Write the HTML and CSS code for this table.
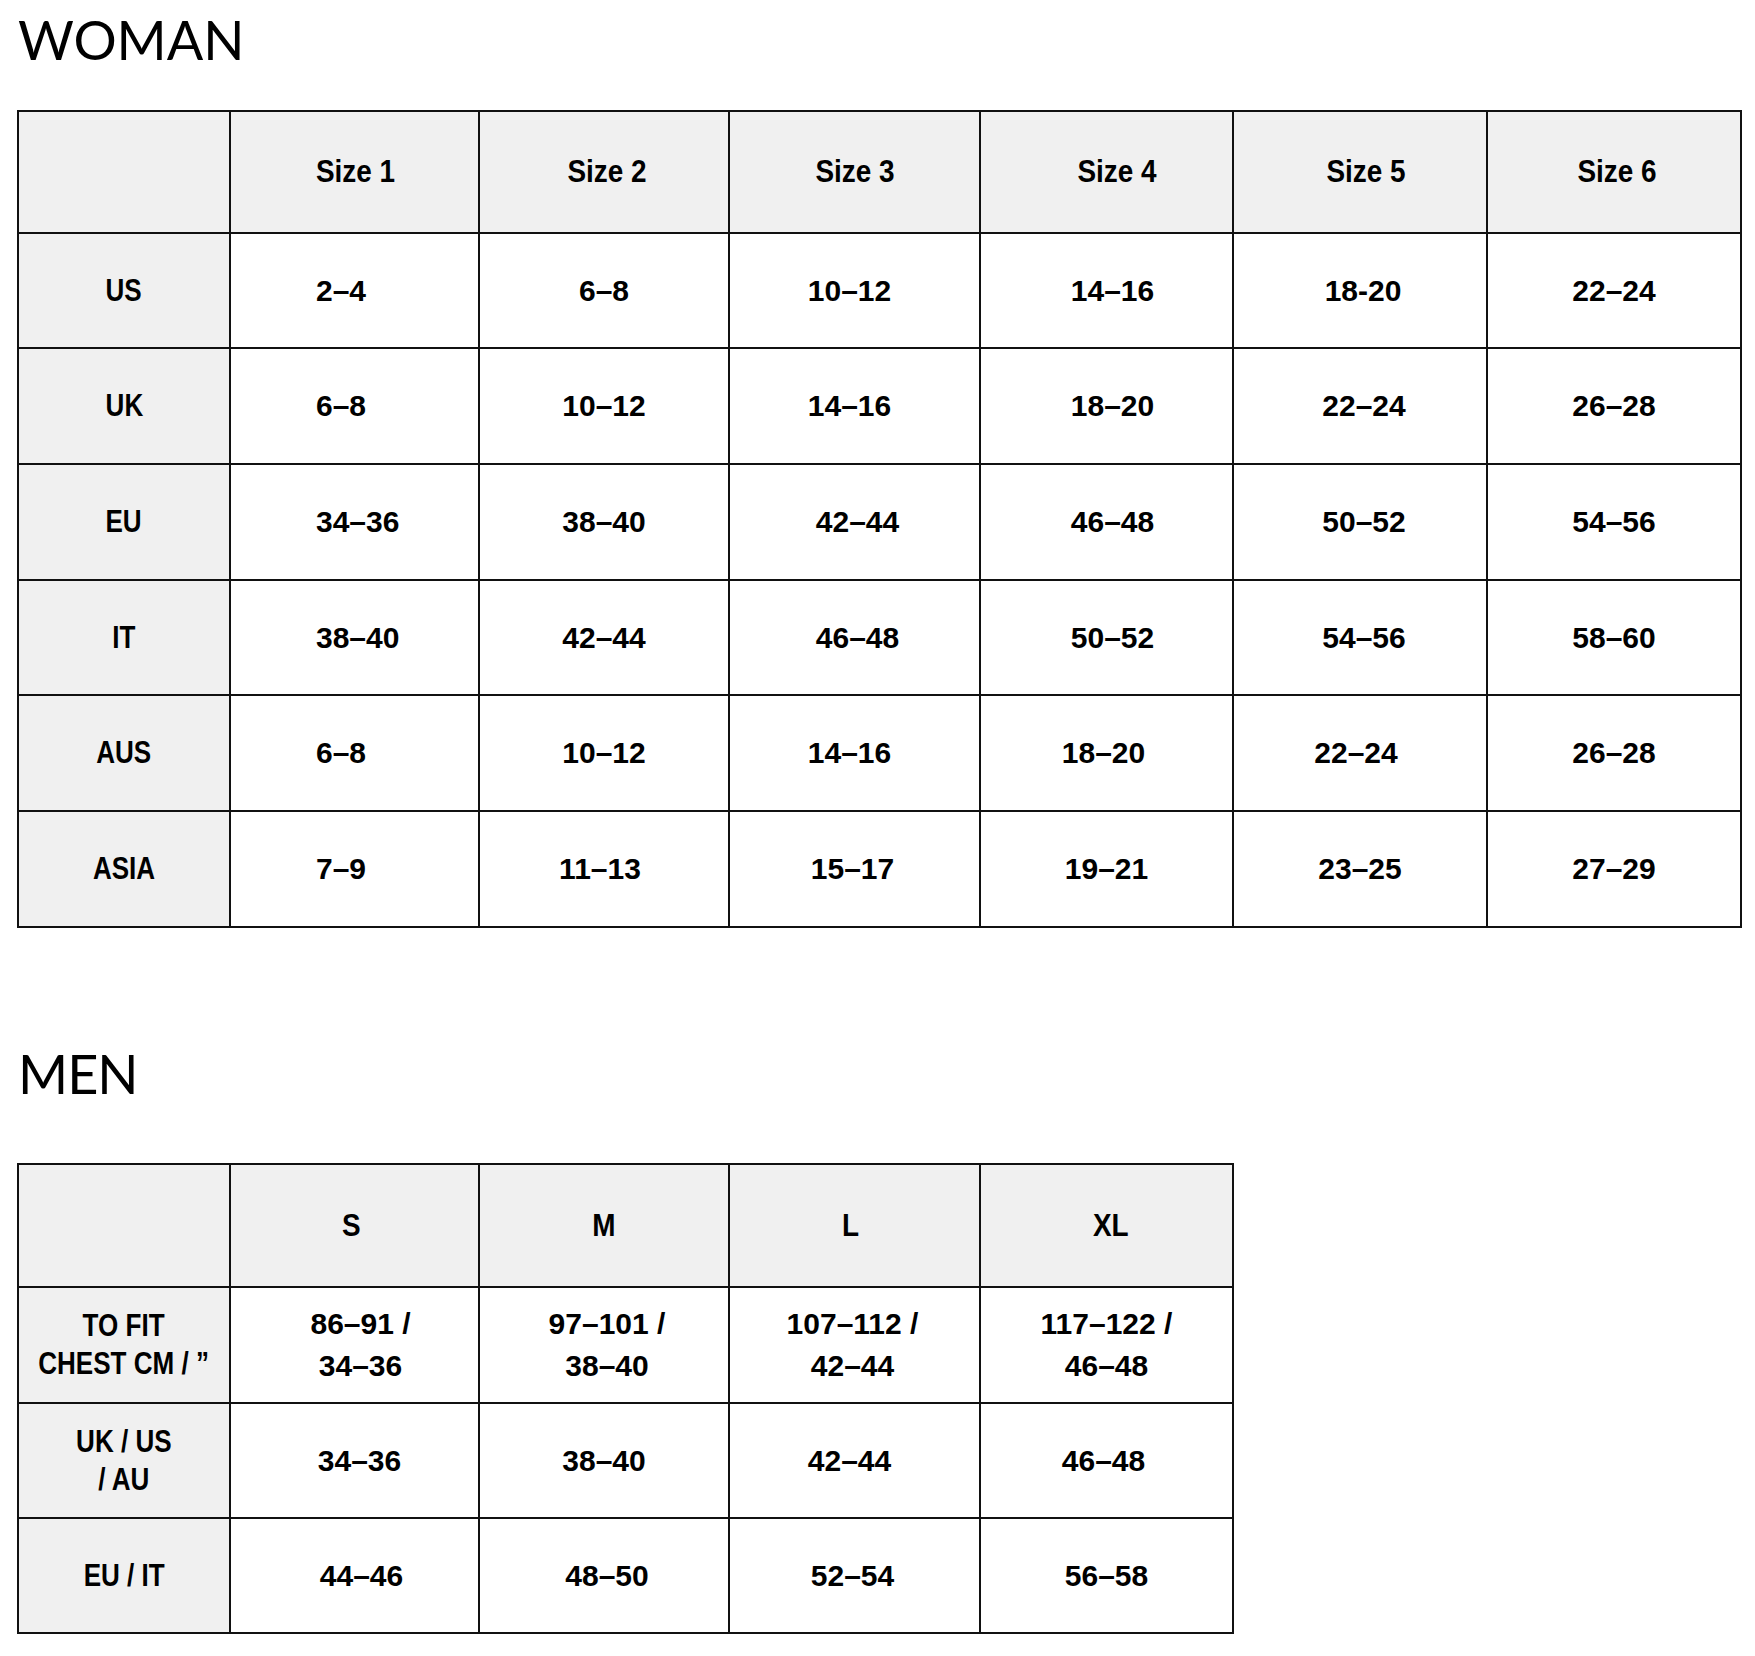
FILE: index.html
```html
<!DOCTYPE html>
<html lang="en">
<head>
<meta charset="utf-8">
<title>Size Guide</title>
<link rel="stylesheet" href="styles.css">
</head>
<body>
<main class="page">
  <section class="section section-woman">
    <h2 class="title">WOMAN</h2>
    <div class="chart chart-woman">
      <div class="cell head label"></div>
      <div class="cell head first"><span class="txt">Size 1</span></div>
      <div class="cell head sr6"><span class="txt">Size 2</span></div>
      <div class="cell head"><span class="txt">Size 3</span></div>
      <div class="cell head sr20"><span class="txt">Size 4</span></div>
      <div class="cell head sr12"><span class="txt">Size 5</span></div>
      <div class="cell head sr6"><span class="txt">Size 6</span></div>

      <div class="cell label"><span class="txt">US</span></div>
      <div class="cell val first">2–4</div>
      <div class="cell val">6–8</div>
      <div class="cell val sl10">10–12</div>
      <div class="cell val sr12">14–16</div>
      <div class="cell val sr6">18-20</div>
      <div class="cell val">22–24</div>

      <div class="cell label"><span class="txt">UK</span></div>
      <div class="cell val first">6–8</div>
      <div class="cell val">10–12</div>
      <div class="cell val sl10">14–16</div>
      <div class="cell val sr12">18–20</div>
      <div class="cell val sr8">22–24</div>
      <div class="cell val">26–28</div>

      <div class="cell label"><span class="txt">EU</span></div>
      <div class="cell val first">34–36</div>
      <div class="cell val">38–40</div>
      <div class="cell val sr6">42–44</div>
      <div class="cell val sr12">46–48</div>
      <div class="cell val sr8">50–52</div>
      <div class="cell val">54–56</div>

      <div class="cell label"><span class="txt">IT</span></div>
      <div class="cell val first">38–40</div>
      <div class="cell val">42–44</div>
      <div class="cell val sr6">46–48</div>
      <div class="cell val sr12">50–52</div>
      <div class="cell val sr8">54–56</div>
      <div class="cell val">58–60</div>

      <div class="cell label"><span class="txt">AUS</span></div>
      <div class="cell val first">6–8</div>
      <div class="cell val">10–12</div>
      <div class="cell val sl10">14–16</div>
      <div class="cell val sl6">18–20</div>
      <div class="cell val sl8">22–24</div>
      <div class="cell val">26–28</div>

      <div class="cell label"><span class="txt">ASIA</span></div>
      <div class="cell val first">7–9</div>
      <div class="cell val sl8">11–13</div>
      <div class="cell val sl4">15–17</div>
      <div class="cell val">19–21</div>
      <div class="cell val">23–25</div>
      <div class="cell val">27–29</div>
    </div>
  </section>

  <section class="section section-men">
    <h2 class="title">MEN</h2>
    <div class="chart chart-men">
      <div class="cell head label"></div>
      <div class="cell head sl6"><span class="txt">S</span></div>
      <div class="cell head"><span class="txt">M</span></div>
      <div class="cell head sl8"><span class="txt">L</span></div>
      <div class="cell head sr8"><span class="txt">XL</span></div>

      <div class="cell label"><span class="txt">TO FIT<br>CHEST CM / ”</span></div>
      <div class="cell val two sr12"><span>86–91 /<br>34–36</span></div>
      <div class="cell val two sr6"><span>97–101 /<br>38–40</span></div>
      <div class="cell val two sl4"><span>107–112 /<br>42–44</span></div>
      <div class="cell val two"><span>117–122 /<br>46–48</span></div>

      <div class="cell label"><span class="txt">UK / US<br>/ AU</span></div>
      <div class="cell val sr10">34–36</div>
      <div class="cell val">38–40</div>
      <div class="cell val sl10">42–44</div>
      <div class="cell val sl6">46–48</div>

      <div class="cell label"><span class="txt">EU / IT</span></div>
      <div class="cell val sr14">44–46</div>
      <div class="cell val sr6">48–50</div>
      <div class="cell val sl4">52–54</div>
      <div class="cell val">56–58</div>
    </div>
  </section>
</main>
</body>
</html>
```

FILE: styles.css
```css
html, body {
  margin: 0;
  padding: 0;
  background: #ffffff;
}

.page {
  padding: 0 0 0 17px;
  color: #000;
}

.section-woman {
  padding-top: 10px;
}

.section-men {
  padding-top: 116px;
}

.title {
  margin: 0;
  padding-left: 1px;
  font-family: "Lato", "Noto Sans", sans-serif;
  font-weight: 400;
  font-size: 54px;
  line-height: 60px;
  height: 60px;
}

.section-men .title {
  letter-spacing: -1px;
}

.chart {
  display: grid;
  gap: 2px;
  padding: 2px;
  background: #111;
  width: max-content;
  margin-top: 40px;
}

.chart-woman {
  grid-template-columns: 210px 247px 248px 249px 251px 252px 252px;
  grid-template-rows: 120px 113px 114px 114px 113px 114px 114px;
}

.chart-men {
  grid-template-columns: 210px 247px 248px 249px 251px;
  grid-template-rows: 121px 114px 113px 113px;
  margin-top: 59px;
}

.cell {
  background: #fff;
  display: flex;
  align-items: center;
  justify-content: center;
  text-align: center;
  font-family: "Liberation Sans", Arial, sans-serif;
  font-weight: 700;
  font-size: 30px;
  line-height: 42px;
}

.head,
.label {
  background: #f0f0f0;
  font-size: 31px;
  line-height: 38px;
}

.txt {
  display: inline-block;
  transform-origin: center;
}

.label .txt {
  transform: scaleX(0.84);
}

.head .txt {
  transform: scaleX(0.9);
}

.chart-woman .first {
  justify-content: flex-start;
  padding-left: 85px;
}

.chart-woman .head.first .txt {
  transform-origin: left center;
}

.val.two {
  line-height: 42px;
}

/* small optical nudges of centred cell content */
.sr6 { padding-left: 6px; }
.sr8 { padding-left: 8px; }
.sr10 { padding-left: 10px; }
.sr12 { padding-left: 12px; }
.sr14 { padding-left: 14px; }
.sr20 { padding-left: 20px; }
.sl4 { padding-right: 4px; }
.sl6 { padding-right: 6px; }
.sl8 { padding-right: 8px; }
.sl10 { padding-right: 10px; }
```
